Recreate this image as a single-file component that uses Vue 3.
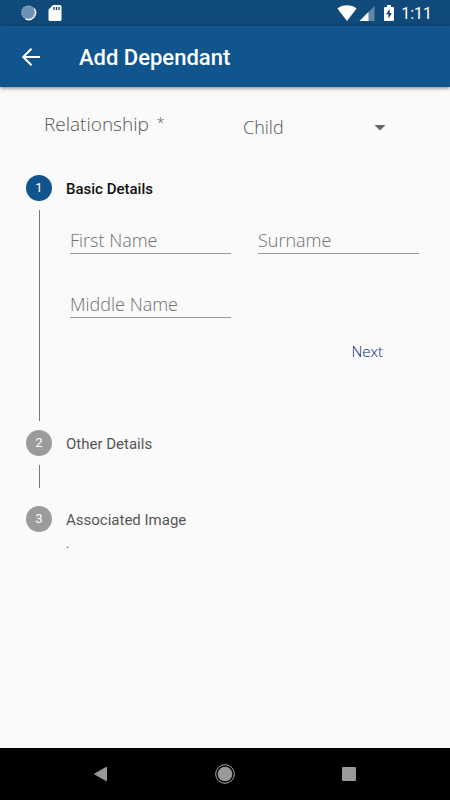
<script setup>
import { ref, reactive } from 'vue'

const relationship = ref('Child')
const form = reactive({ firstName: '', surname: '', middleName: '' })
const fields = [
  { key: 'firstName', label: 'First Name' },
  { key: 'surname', label: 'Surname' },
  { key: 'middleName', label: 'Middle Name' },
]
</script>

<template>
  <div class="screen">
    <div class="status-bar">
      <svg width="18" height="18" viewBox="0 0 18 18" aria-hidden="true">
        <circle cx="8.300" cy="8.500" r="6.800" fill="#6a90b4" />
        <circle cx="8.300" cy="8.500" r="6.400" fill="none" stroke="#93aec7" stroke-width="1.500" stroke-dasharray="1.400 1" />
        <path d="M14.500 5A7 7 0 0 1 6 15.200" fill="none" stroke="#fff" stroke-width="1.400" stroke-linecap="round" />
      </svg>
      <svg width="18" height="18" viewBox="0 0 18 18" aria-hidden="true">
        <path d="M7 1h7a1.500 1.500 0 0 1 1.500 1.500v13A1.500 1.500 0 0 1 14 17H4a1.500 1.500 0 0 1-1.500-1.500V5.500Z" fill="#fff" />
        <path d="M8 3v3M10.500 3v3M13 3v3" stroke="#14366b" stroke-width="1.300" />
      </svg>
      <div class="status-right">
        <svg width="20" height="18" viewBox="0 0 20 18" aria-hidden="true">
          <path d="M.4 4.500C5.500.3 14.500.3 19.600 4.500L10 17Z" fill="#fff" />
        </svg>
        <svg width="16" height="18" viewBox="0 0 16 18" aria-hidden="true">
          <path d="M.5 17 15.500 2v15Z" fill="#6386a8" />
          <path d="M.5 17 9.500 8v9Z" fill="#fff" />
        </svg>
        <svg class="battery" width="12" height="18" viewBox="0 0 12 18" aria-hidden="true">
          <path d="M4 1h4v2h2a1 1 0 0 1 1 1v12a1 1 0 0 1-1 1H2a1 1 0 0 1-1-1V4a1 1 0 0 1 1-1h2Z" fill="#fff" />
          <path d="M6.700 5 3.200 10.300h2.300V14.500l3.400-5.200H6.700Z" fill="#14366b" />
        </svg>
        <span class="clock">1:11</span>
      </div>
    </div>

    <header class="app-bar">
      <button class="back" type="button" aria-label="Back">
        <svg width="20" height="20" viewBox="0 0 20 20" aria-hidden="true">
          <path d="M19 10H2.500M10.500 1.700 2.200 10l8.300 8.300" fill="none" stroke="#fff" stroke-width="2" />
        </svg>
      </button>
      <h1>Add Dependant</h1>
    </header>

    <main>
      <div class="relationship">
        <label for="relationship">Relationship<span class="star">*</span></label>
        <div class="picker">
          <select id="relationship" v-model="relationship">
            <option>Child</option>
            <option>Spouse</option>
            <option>Parent</option>
          </select>
          <svg class="caret" width="12" height="6" viewBox="0 0 12 6" aria-hidden="true">
            <path d="M.5 0h11L6 5.500Z" fill="#666" />
          </svg>
        </div>
      </div>

      <ol class="steps">
        <li>
          <div class="step-head active"><span class="badge">1</span><h2>Basic Details</h2></div>
          <div class="step-body">
            <form @submit.prevent>
              <div class="fields">
                <input
                  v-for="field in fields"
                  :key="field.key"
                  v-model="form[field.key]"
                  type="text"
                  :placeholder="field.label"
                  :aria-label="field.label"
                />
              </div>
              <button class="next" type="submit">Next</button>
            </form>
          </div>
        </li>
        <li>
          <div class="step-head"><span class="badge">2</span><h2>Other Details</h2></div>
          <div class="step-body collapsed"></div>
        </li>
        <li>
          <div class="step-head"><span class="badge">3</span><h2>Associated Image</h2></div>
          <p class="note">.</p>
        </li>
      </ol>
    </main>

    <nav class="nav-bar">
      <button type="button" aria-label="Back">
        <svg width="20" height="20" viewBox="0 0 20 20" aria-hidden="true">
          <path d="M3.500 10 15.500 3.200v13.600Z" fill="#999" stroke="#999" stroke-linejoin="round" />
        </svg>
      </button>
      <button type="button" aria-label="Home">
        <svg width="20" height="20" viewBox="0 0 20 20" aria-hidden="true">
          <circle cx="10" cy="10" r="7.300" fill="#999" />
          <circle cx="10" cy="10" r="9.300" fill="none" stroke="#aaa" />
        </svg>
      </button>
      <button type="button" aria-label="Recent apps">
        <svg width="20" height="20" viewBox="0 0 20 20" aria-hidden="true">
          <rect x="3" y="3" width="14" height="14" rx="1" fill="#999" />
        </svg>
      </button>
    </nav>
  </div>
</template>

<style>
body {
  margin: 0;
  background: #fafafa;
}
</style>

<style scoped>
.screen {
  display: flex;
  flex-direction: column;
  min-height: 100vh;
  background: #fafafa;
  font-family: Roboto, sans-serif;
  color: #555;
}
button,
input,
select {
  margin: 0;
  padding: 0;
  border: 0;
  background: none;
  font: inherit;
  color: inherit;
}
svg {
  display: block;
}
.status-bar {
  display: flex;
  align-items: center;
  gap: 8px;
  height: 26px;
  padding: 0 18px 0 20px;
  background: #104a7a;
}
.status-right {
  display: flex;
  align-items: center;
  gap: 2px;
  margin-left: auto;
}
.battery {
  margin: 0 4px 0 6px;
}
.clock {
  padding-top: 2px;
  font-size: 16px;
  line-height: 24px;
  font-weight: 400;
  color: #fff;
}
.app-bar {
  display: flex;
  align-items: center;
  gap: 38px;
  height: 61px;
  padding: 0 21px;
  background: #11558f;
  box-shadow: 0 1px 4px rgba(0, 0, 0, 0.5);
}
h1 {
  margin: 0;
  padding-top: 2px;
  font-size: 22px;
  line-height: 28px;
  font-weight: 500;
  color: #fff;
}
main {
  flex: 1;
  padding: 24px 31px 24px 26px;
}
.relationship {
  display: grid;
  grid-template-columns: 199px 1fr;
  padding: 0 33px 0 18px;
  font-family: "Open Sans", sans-serif;
  font-size: 18px;
  line-height: 26px;
  font-weight: 300;
}
label {
  font-size: 19px;
}
.star {
  margin-left: 8px;
  font-size: 14px;
  line-height: 1;
  vertical-align: 3px;
}
.picker {
  position: relative;
  padding-top: 3px;
}
select {
  width: 100%;
  height: 26px;
  appearance: none;
}
.caret {
  position: absolute;
  top: 14px;
  right: 0;
}
.steps {
  margin: 0;
  padding: 35px 0 0;
  list-style: none;
}
.step-head {
  display: flex;
  align-items: center;
  gap: 14px;
}
.badge {
  width: 26px;
  height: 26px;
  border-radius: 50%;
  background: #9b9b9b;
  color: #fff;
  font-size: 13px;
  line-height: 26px;
  text-align: center;
}
h2 {
  margin: 0;
  padding-top: 2px;
  font-size: 15px;
  line-height: 24px;
  font-weight: 400;
}
.active .badge {
  background: #11558f;
}
.active h2 {
  font-weight: 500;
  color: #111;
}
.step-body {
  min-height: 211px;
  margin: 9px 0 9px 13px;
  border-left: 1px solid #777;
}
.step-body.collapsed {
  min-height: 23px;
  margin-bottom: 18px;
}
form {
  padding: 16px 0 0 30px;
  font-family: "Open Sans", sans-serif;
  font-weight: 300;
}
.fields {
  display: grid;
  grid-template-columns: 1fr 1fr;
  gap: 36px 27px;
}
input {
  box-sizing: border-box;
  min-width: 0;
  height: 28px;
  border-bottom: 1px solid #999;
  border-radius: 0;
  font-size: 18px;
}
input::placeholder {
  color: #707070;
  opacity: 1;
}
.next {
  display: block;
  margin: 20px 36px 0 auto;
  font-size: 15px;
  line-height: 26px;
  font-weight: 300;
  color: #001f80;
}
.note {
  margin: 4px 0 0 40px;
  font-size: 12px;
  line-height: 16px;
}
.nav-bar {
  display: flex;
  justify-content: center;
  gap: 104px;
  padding: 16px 0;
  background: #000;
}
</style>
